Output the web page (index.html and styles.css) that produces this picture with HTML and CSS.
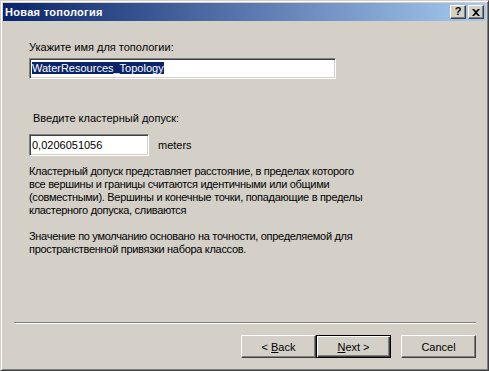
FILE: index.html
```html
<!DOCTYPE html>
<html lang="ru">
<head>
    <meta charset="UTF-8">
    <title>Новая топология</title>
    <link rel="stylesheet" href="styles.css">
</head>
<body>
    <div class="window">
        <div class="titlebar">
            <span class="title">Новая топология</span>
            <div class="caption-buttons">
                <span class="cap-btn help">?</span>
                <span class="cap-btn close">
                    <svg width="8" height="7" viewBox="0 0 8 7">
                        <path d="M0 0h2l2 2 2-2h2L5 3.5 8 7H6L4 5 2 7H0l3-3.5z" fill="#000"/>
                    </svg>
                </span>
            </div>
        </div>
        <div class="content">
            <div class="page">
                <div class="label">Укажите имя для топологии:</div>
                <div class="edit edit-name"><span class="sel">WaterResources_Topology</span></div>

                <div class="label label-tol">Введите кластерный допуск:</div>
                <div class="tol-row">
                    <div class="edit edit-tol">0,0206051056</div>
                    <span class="units">meters</span>
                </div>

                <p>Кластерный допуск представляет расстояние, в пределах которого<br>
                все вершины и границы считаются идентичными или общими<br>
                (совместными). Вершины и конечные точки, попадающие в пределы<br>
                кластерного допуска, сливаются</p>

                <p>Значение по умолчанию основано на точности, определяемой для<br>
                пространственной привязки набора классов.</p>
            </div>
            <div class="footer">
                <div class="separator"></div>
                <div class="buttons">
                    <button class="btn">&lt; <u>B</u>ack</button>
                    <button class="btn default"><u>N</u>ext &gt;</button>
                    <button class="btn cancel">Cancel</button>
                </div>
            </div>
        </div>
    </div>
</body>
</html>
```

FILE: styles.css
```css
body {
    margin: 0;
    font-family: 'Liberation Sans', Arial, sans-serif;
    font-size: 11px;
    color: #000;
    background: #d4d0c8;
}

.window {
    width: 489px;
    height: 371px;
    box-sizing: border-box;
    display: flex;
    flex-direction: column;
    background: #d4d0c8;
    border: 1px solid;
    border-color: #d4d0c8 #404040 #404040 #d4d0c8;
    box-shadow: inset 1px 1px #fff, inset -1px -1px #808080;
    padding: 2px;
}

.titlebar {
    height: 18px;
    display: flex;
    align-items: center;
    justify-content: space-between;
    background: linear-gradient(to right, #0a246a, #a6caf0);
    padding: 0 2px 0 2px;
}

.title {
    color: #fff;
    font-weight: bold;
    font-size: 11px;
    letter-spacing: 0.3px;
}

.caption-buttons {
    display: flex;
    gap: 2px;
}

.cap-btn {
    width: 16px;
    height: 14px;
    box-sizing: border-box;
    display: flex;
    align-items: center;
    justify-content: center;
    background: #d4d0c8;
    border: 1px solid;
    border-color: #fff #404040 #404040 #fff;
    box-shadow: inset -1px -1px #808080;
    font-weight: bold;
    font-size: 11px;
    line-height: 1;
}

.help {
    padding-bottom: 1px;
}

.content {
    flex: 1;
    display: flex;
    flex-direction: column;
}

.page {
    padding: 20px 0 0 26px;
}

.label {
    line-height: 13px;
}

.label-tol {
    margin-top: 33px;
    padding-left: 4px;
}

.edit {
    box-sizing: border-box;
    height: 21px;
    background: #fff;
    border: 1px solid;
    border-color: #808080 #fff #fff #808080;
    box-shadow: inset 1px 1px #404040, inset -1px -1px #d4d0c8;
    padding: 3px 2px 0 2px;
    line-height: 13px;
}

.edit-name {
    width: 307px;
    margin-top: 4px;
}

.sel {
    background: #0a246a;
    color: #fff;
}

.tol-row {
    margin-top: 9px;
    display: flex;
    align-items: center;
}

.edit-tol {
    width: 120px;
    height: 22px;
    padding-top: 4px;
}

.units {
    margin-left: 9px;
}

p {
    margin: 9px 0 13px;
    line-height: 13px;
    letter-spacing: -0.3px;
}

.footer {
    margin-top: auto;
    padding-bottom: 10px;
}

.separator {
    margin: 0 10px 0 11px;
    border-top: 1px solid #808080;
    border-bottom: 1px solid #fff;
}

.buttons {
    margin-top: 11px;
    padding-right: 10px;
    display: flex;
    justify-content: flex-end;
}

.btn {
    width: 75px;
    height: 23px;
    box-sizing: border-box;
    font-family: inherit;
    font-size: 11px;
    color: #000;
    background: #d4d0c8;
    border: 1px solid;
    border-color: #fff #404040 #404040 #fff;
    box-shadow: inset -1px -1px #808080;
    padding: 0;
}

.btn.default {
    border: 1px solid #000;
    box-shadow: inset 1px 1px #fff, inset -1px -1px #404040, inset -2px -2px #808080;
}

.btn.cancel {
    margin-left: 10px;
}
```
